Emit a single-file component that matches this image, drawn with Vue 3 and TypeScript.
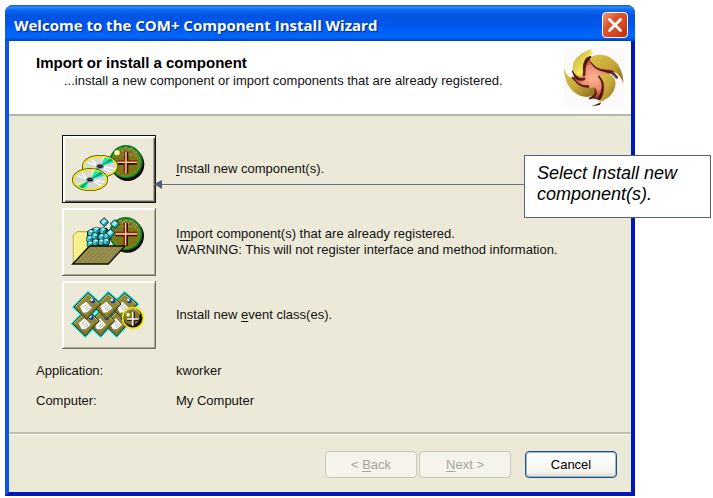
<script setup lang="ts">
interface Choice {
  id: 'install' | 'import' | 'event'
  before: string
  key: string
  after: string
  note?: string
}

const choices: Choice[] = [
  { id: 'install', before: '', key: 'I', after: 'nstall new component(s).' },
  {
    id: 'import',
    before: 'I',
    key: 'm',
    after: 'port component(s) that are already registered.',
    note: 'WARNING: This will not register interface and method information.',
  },
  { id: 'event', before: 'Install new ', key: 'e', after: 'vent class(es).' },
]

const details = [
  { name: 'Application:', value: 'kworker' },
  { name: 'Computer:', value: 'My Computer' },
]

const cards = [
  { x: 189, y: 144 }, { x: 141, y: 144 }, { x: 95, y: 144 },
  { x: 209, y: 94 }, { x: 160, y: 94 }, { x: 99, y: 94 },
]

const cubes = [
  { x: 110, y: 98 }, { x: 126, y: 90 }, { x: 146, y: 92 }, { x: 106, y: 116 },
  { x: 122, y: 108 }, { x: 142, y: 110 }, { x: 108, y: 132 }, { x: 124, y: 126 },
  { x: 142, y: 126 }, { x: 158, y: 108 }, { x: 156, y: 124 },
]
</script>

<template>
  <main class="page">
    <section class="window" aria-label="Component Install Wizard">
      <header class="titlebar">
        <h1>Welcome to the COM+ Component Install Wizard</h1>
        <button class="close" type="button" aria-label="Close">
          <svg viewBox="0 0 26 26"><path d="M7 7L19 19M19 7L7 19" /></svg>
        </button>
      </header>

      <div class="client">
        <div class="banner">
          <div class="banner-text">
            <h2>Import or install a component</h2>
            <p>...install a new component or import components that are already registered.</p>
          </div>
          <svg class="logo" viewBox="6 6 180 180" aria-hidden="true">
            <defs>
              <radialGradient id="core" gradientUnits="userSpaceOnUse" cx="94" cy="96" r="68">
                <stop offset="0" stop-color="#ffb594" />
                <stop offset=".55" stop-color="#e98a6c" />
                <stop offset=".85" stop-color="#a53c29" />
                <stop offset="1" stop-color="#3a0f09" />
              </radialGradient>
              <linearGradient id="gold" x1="0" y1="0" x2="1" y2="1">
                <stop offset="0" stop-color="#d9c646" />
                <stop offset=".5" stop-color="#c7a83a" />
                <stop offset="1" stop-color="#8c6c18" />
              </linearGradient>
              <linearGradient id="pale" x1="0" y1="0" x2="1" y2="1">
                <stop offset="0" stop-color="#bca332" />
                <stop offset=".6" stop-color="#f3e65e" />
                <stop offset="1" stop-color="#cbb343" />
              </linearGradient>
            </defs>
            <rect x="6" y="6" width="180" height="180" fill="#fdf9fa" />
            <path d="M70 34L92 32L130 50L162 82C154 76 144 77 142 84L150 120L122 164L86 156L94 134L38 116L30 96C38 100 38 94 34 80L40 60Z" fill="url(#core)" />
            <g fill="none" stroke="#3f0c07" stroke-linecap="round" opacity=".85">
              <path d="M84 34C67 43 65 65 66 86" stroke-width="9" />
              <path d="M34 76C40 96 50 105 66 98M32 96C42 116 56 123 78 122" stroke-width="8" />
              <path d="M90 50C103 73 124 72 146 79C154 82 159 86 164 94" stroke-width="8" />
              <path d="M112 92C127 108 123 134 112 158" stroke-width="7" />
              <path d="M98 130C106 144 95 156 84 157" stroke-width="7" />
            </g>
            <path d="M91 10C56 16 31 42 32 67C34 85 48 96 60 89C68 80 57 62 67 44C71 35 82 28 96 21L85 18Z" fill="url(#pale)" />
            <path d="M83 39C96 22 129 23 151 39C173 54 184 81 184 112C174 85 157 71 133 70C107 70 93 60 83 39Z" fill="url(#gold)" />
            <path d="M112 90C133 78 155 84 160 105C164 135 140 164 108 168C130 151 138 115 112 90Z" fill="url(#gold)" />
            <path d="M6 66C6 108 29 149 72 153C91 154 101 143 98 123C79 130 51 124 39 106C29 91 17 100 6 66Z" fill="url(#gold)" />
            <path d="M88 181L118 169L113 177Z" fill="#39270b" />
          </svg>
        </div>

        <div class="body">
          <div class="choices">
            <div v-for="c in choices" :key="c.id" class="choice">
              <button :id="c.id" type="button" class="tile" :class="{ chosen: c.id === 'install' }" :aria-labelledby="c.id + '-label'">
                <svg v-if="c.id === 'install'" viewBox="23 30 282 204">
                  <circle cx="220" cy="118" r="50" fill="#080808" />
                  <circle cx="215" cy="110" r="50" fill="#197b22" />
                  <circle cx="215" cy="111" r="43" fill="#7b7617" stroke="#579f28" stroke-width="3" />
                  <path d="M196 68L205 77L214 66L223 77L232 68L241 80L249 83M206 89L216 84L229 91L239 85L251 99" fill="none" stroke="#a8aa85" stroke-width="4" stroke-dasharray="4 5" />
                  <path d="M191 116H248M219 80V145" stroke="#3b0505" stroke-width="6" />
                  <path d="M189 108H248M211 80V143" stroke="#941b14" stroke-width="5" />
                  <path d="M189 112H248M215 80V145" stroke="#f4dc9d" stroke-width="4" />
                  <circle cx="188" cy="83" r="8" fill="#ffffb0" />
                  <g v-for="p in [{ x: 137, y: 124 }, { x: 107, y: 164 }]" :key="p.x" :transform="`translate(${p.x} ${p.y})`">
                    <ellipse rx="54" ry="34" fill="#101010" /><ellipse rx="50" ry="30" fill="#d7d7d5" stroke="#f4ed00" stroke-width="5" />
                    <path d="M0 0L12 -27L31 -23L44 -12ZM0 0L-13 27L-31 22L-42 13Z" fill="#10e6dc" />
                    <path d="M0 0L31 -23L39 -18ZM0 0L-31 22L-22 25Z" fill="#169c28" />
                    <path d="M0 0L8 -28L15 -28ZM0 0L-36 18L-43 12Z" fill="#f9f47b" />
                    <path d="M-38 -12L-12 -4M-27 -21L-9 -6M13 7L34 18M13 2L43 7" stroke="#fff" stroke-width="4" />
                    <ellipse rx="12" ry="8" fill="#888" /><ellipse rx="8" ry="5" fill="#111" /><ellipse rx="3" ry="2" fill="#159c9b" />
                  </g>
                </svg>

                <svg v-else-if="c.id === 'import'" viewBox="23 24 282 204">
                  <circle cx="219" cy="108" r="50" fill="#080808" />
                  <circle cx="214" cy="101" r="50" fill="#197b22" />
                  <circle cx="214" cy="102" r="43" fill="#7b7617" stroke="#579f28" stroke-width="3" />
                  <path d="M196 60L205 69L214 59L223 69L232 60L241 72L250 76M204 80L216 75L229 82L239 76L251 91" fill="none" stroke="#a8aa85" stroke-width="4" stroke-dasharray="4 5" />
                  <path d="M184 106H248M218 69V138" stroke="#3b0505" stroke-width="6" />
                  <path d="M184 98H248M210 69V136" stroke="#941b14" stroke-width="5" />
                  <path d="M184 102H248M214 69V138" stroke="#f4dc9d" stroke-width="4" />
                  <path d="M57 191V106L68 95H99V142L57 191Z" fill="#f6f188" stroke="#b1a631" stroke-width="3" />
                  <path d="M60 188V109M64 103H96" stroke="#fff8bd" stroke-width="3" />
                  <path d="M98 94L118 83H157L174 104L163 138H98Z" fill="#083c43" />
                  <g v-for="(p, i) in cubes" :key="i" :transform="`translate(${p.x} ${p.y})`">
                    <path d="M-9 -5L1 -9L9 -4V7L0 11L-9 7Z" fill="#188b98" stroke="#073b43" stroke-width="2" />
                    <path d="M-8 -5L1 -8L8 -4L0 0Z" fill="#b5f6f1" /><path d="M-8 -4L0 0V9L-8 6Z" fill="#45cbd0" />
                  </g>
                  <g v-for="p in [{ x: 149, y: 66 }, { x: 181, y: 72 }, { x: 168, y: 99 }]" :key="p.x" :transform="`translate(${p.x} ${p.y})`">
                    <path d="M0 -13L14 0L1 14L-13 0Z" fill="#23a1ad" stroke="#063840" stroke-width="3" />
                    <path d="M0 -10L8 -2L-2 7L-9 0Z" fill="#9ff0ed" />
                  </g>
                  <path d="M55 192L106 138H212L162 192Z" fill="#908847" stroke="#121207" stroke-width="4" />
                  <path d="M69 185L110 143M83 185L124 143M97 185L138 143M111 185L152 143M125 185L166 143M139 185L180 143M153 185L194 143" stroke="#b5af76" stroke-width="3" stroke-dasharray="3 3" />
                </svg>

                <svg v-else viewBox="23 17 282 204">
                  <path v-for="(p, i) in cards" :key="'edge' + i" :transform="`translate(${p.x} ${p.y})`" d="M2 -43L41 -8L-2 39L-41 1Z" fill="#00e5e9" stroke="#00e5e9" stroke-width="7" />
                  <g v-for="(p, i) in cards" :key="i" :transform="`translate(${p.x} ${p.y})`">
                    <path d="M2 -41L40 -8L-2 38L-40 1Z" fill="#8f8737" stroke="#26260d" stroke-width="3" />
                    <path d="M-36 0L2 -37L35 -9" fill="none" stroke="#cec66d" stroke-width="3" />
                    <path d="M-22 -1L-4 -15L14 4L-1 17L-13 18Z" fill="#fff" />
                    <path d="M-13 1L-1 -7M-8 7L4 -1M-4 12L8 4" stroke="#888" stroke-width="2" />
                    <circle cx="16" cy="-17" r="7" fill="#163b9b" /><circle cx="13" cy="-20" r="4" fill="#b5fcff" />
                    <path d="M-30 5L-2 31L30 -2" fill="none" stroke="#655f22" stroke-width="3" />
                  </g>
                  <circle cx="236" cy="128" r="31" fill="#111" stroke="#f4e800" stroke-width="5" />
                  <circle cx="232" cy="125" r="24" fill="#807727" />
                  <path d="M211 115C222 94 249 98 257 117" fill="none" stroke="#bdb55b" stroke-width="4" />
                  <path d="M238 111V151M218 133H253" stroke="#3f1709" stroke-width="8" />
                  <path d="M235 111V151M218 131H253" stroke="#fff" stroke-width="5" />
                  <path d="M215 118H227M221 112V124" stroke="#ffffaa" stroke-width="5" />
                </svg>
              </button>
              <label :id="c.id + '-label'" :for="c.id">{{ c.before }}<u>{{ c.key }}</u>{{ c.after }}<span v-if="c.note" class="note">{{ c.note }}</span></label>
            </div>
          </div>

          <dl class="details">
            <template v-for="d in details" :key="d.name">
              <dt>{{ d.name }}</dt><dd>{{ d.value }}</dd>
            </template>
          </dl>
        </div>

        <footer class="actions">
          <button type="button" disabled>&lt; <u>B</u>ack</button>
          <button type="button" disabled><u>N</u>ext &gt;</button>
          <button class="cancel" type="button">Cancel</button>
        </footer>
      </div>
    </section>

    <aside class="annotation">
      <span class="arrow" aria-hidden="true"></span>
      <p>Select Install new component(s).</p>
    </aside>
  </main>
</template>

<style>
body {
  margin: 0;
  background: #fff;
}
</style>

<style scoped>
.page {
  position: relative;
  box-sizing: border-box;
  min-height: 100vh;
  padding: 5px 78px 2px 5px;
  display: flex;
  color: #111;
  font: 13px/16px "Liberation Sans", Arial, sans-serif;
}
h1, h2, p, dl, dd {
  margin: 0;
}
.window {
  flex: 1;
  min-width: 0;
  display: flex;
  flex-direction: column;
  border-radius: 8px 8px 0 0;
  background: #0830cb;
  overflow: hidden;
}
.titlebar {
  display: flex;
  align-items: center;
  justify-content: space-between;
  height: 36px;
  box-sizing: border-box;
  padding: 4px 7px 0 9px;
  background: linear-gradient(#0b56c8 0, #2c8cff 2px, #1069f0 5px, #0054e3 10px, #0056ea 20px, #0067ff 30px, #0061f5 33px, #003ec3 36px);
}
h1 {
  color: #fff;
  font: bold 15px/20px "Open Sans", sans-serif;
  white-space: nowrap;
  text-shadow: 1px 1px 1px #07287c;
}
.close {
  width: 26px;
  height: 26px;
  padding: 0;
  border: 1px solid #fff;
  border-radius: 4px;
  background: linear-gradient(135deg, #ef9a80, #e05430 35%, #d84720 65%, #b92b0a);
}
.close svg {
  display: block;
  width: 24px;
  height: 24px;
}
.close path {
  fill: none;
  stroke: #fff;
  stroke-width: 3;
  stroke-linecap: round;
}
.client {
  flex: 1;
  display: flex;
  flex-direction: column;
  border: solid;
  border-width: 0 4px 4px;
  border-color: #0046e8 #0018b8 #0018b8 #0855e8;
  background: #ece9d8;
}
.banner {
  display: flex;
  justify-content: space-between;
  box-sizing: border-box;
  height: 75px;
  padding: 7px 7px 0 27px;
  border-bottom: 2px solid #b9b6a6;
  background: #fff;
}
.banner-text {
  padding-top: 6px;
}
h2 {
  color: #000;
  font: bold 15px/17px "Liberation Sans", Arial, sans-serif;
}
.banner p {
  padding: 2px 0 0 28px;
}
.logo {
  width: 60px;
  height: 60px;
}
.body {
  flex: 1;
  padding: 19px 27px 0;
}
.choices {
  display: grid;
  gap: 5px;
  padding-left: 26px;
}
.choice {
  display: flex;
  align-items: center;
  gap: 20px;
}
.tile {
  width: 94px;
  height: 68px;
  padding: 0;
  border: 0;
  background: #ece9d8;
  box-shadow: inset -1px -1px #716f64, inset 2px 2px #fff, inset -2px -2px #aca899;
}
.tile.chosen {
  box-shadow: inset 0 0 0 1px #111, inset 3px 3px #fff, inset -2px -2px #58574f, inset -3px -3px #aca899;
}
.tile svg {
  display: block;
  width: 94px;
  height: 68px;
}
.note {
  display: block;
}
u {
  text-decoration: underline;
  text-underline-offset: 2px;
}
.details {
  display: grid;
  grid-template-columns: 140px 1fr;
  row-gap: 14px;
  padding-top: 14px;
}
.actions {
  display: flex;
  justify-content: flex-end;
  gap: 2px;
  padding: 17px 14px 14px;
  border-top: 2px solid #c2beae;
  box-shadow: inset 0 1px #fff;
}
.actions button {
  width: 92px;
  height: 27px;
  padding: 0;
  border: 1px solid #c9c7ba;
  border-radius: 4px;
  background: #f5f4ea;
  color: #a5a496;
  font: inherit;
}
.actions .cancel {
  margin-left: 12px;
  border: 1px solid #1c4f85;
  box-shadow: inset 0 0 0 1px #9db8d3;
  background: linear-gradient(#fff, #f5f4ef 80%, #dcd7cb);
  color: #000;
}
.annotation {
  position: absolute;
  top: 155px;
  left: 154px;
  right: 2px;
  display: flex;
  align-items: flex-start;
}
.arrow {
  position: relative;
  flex: 1;
  height: 1px;
  margin-top: 29px;
  background: #69748c;
}
.arrow::before {
  content: "";
  position: absolute;
  left: 0;
  top: -4px;
  border: solid transparent;
  border-width: 4px 8px 5px 0;
  border-right-color: #4e5c7c;
}
.annotation p {
  box-sizing: border-box;
  width: 187px;
  padding: 7px 12px 12px;
  border: 1px solid #52617f;
  background: #fff;
  color: #000;
  font: italic 18px/21px "Liberation Sans", Arial, sans-serif;
}
</style>
